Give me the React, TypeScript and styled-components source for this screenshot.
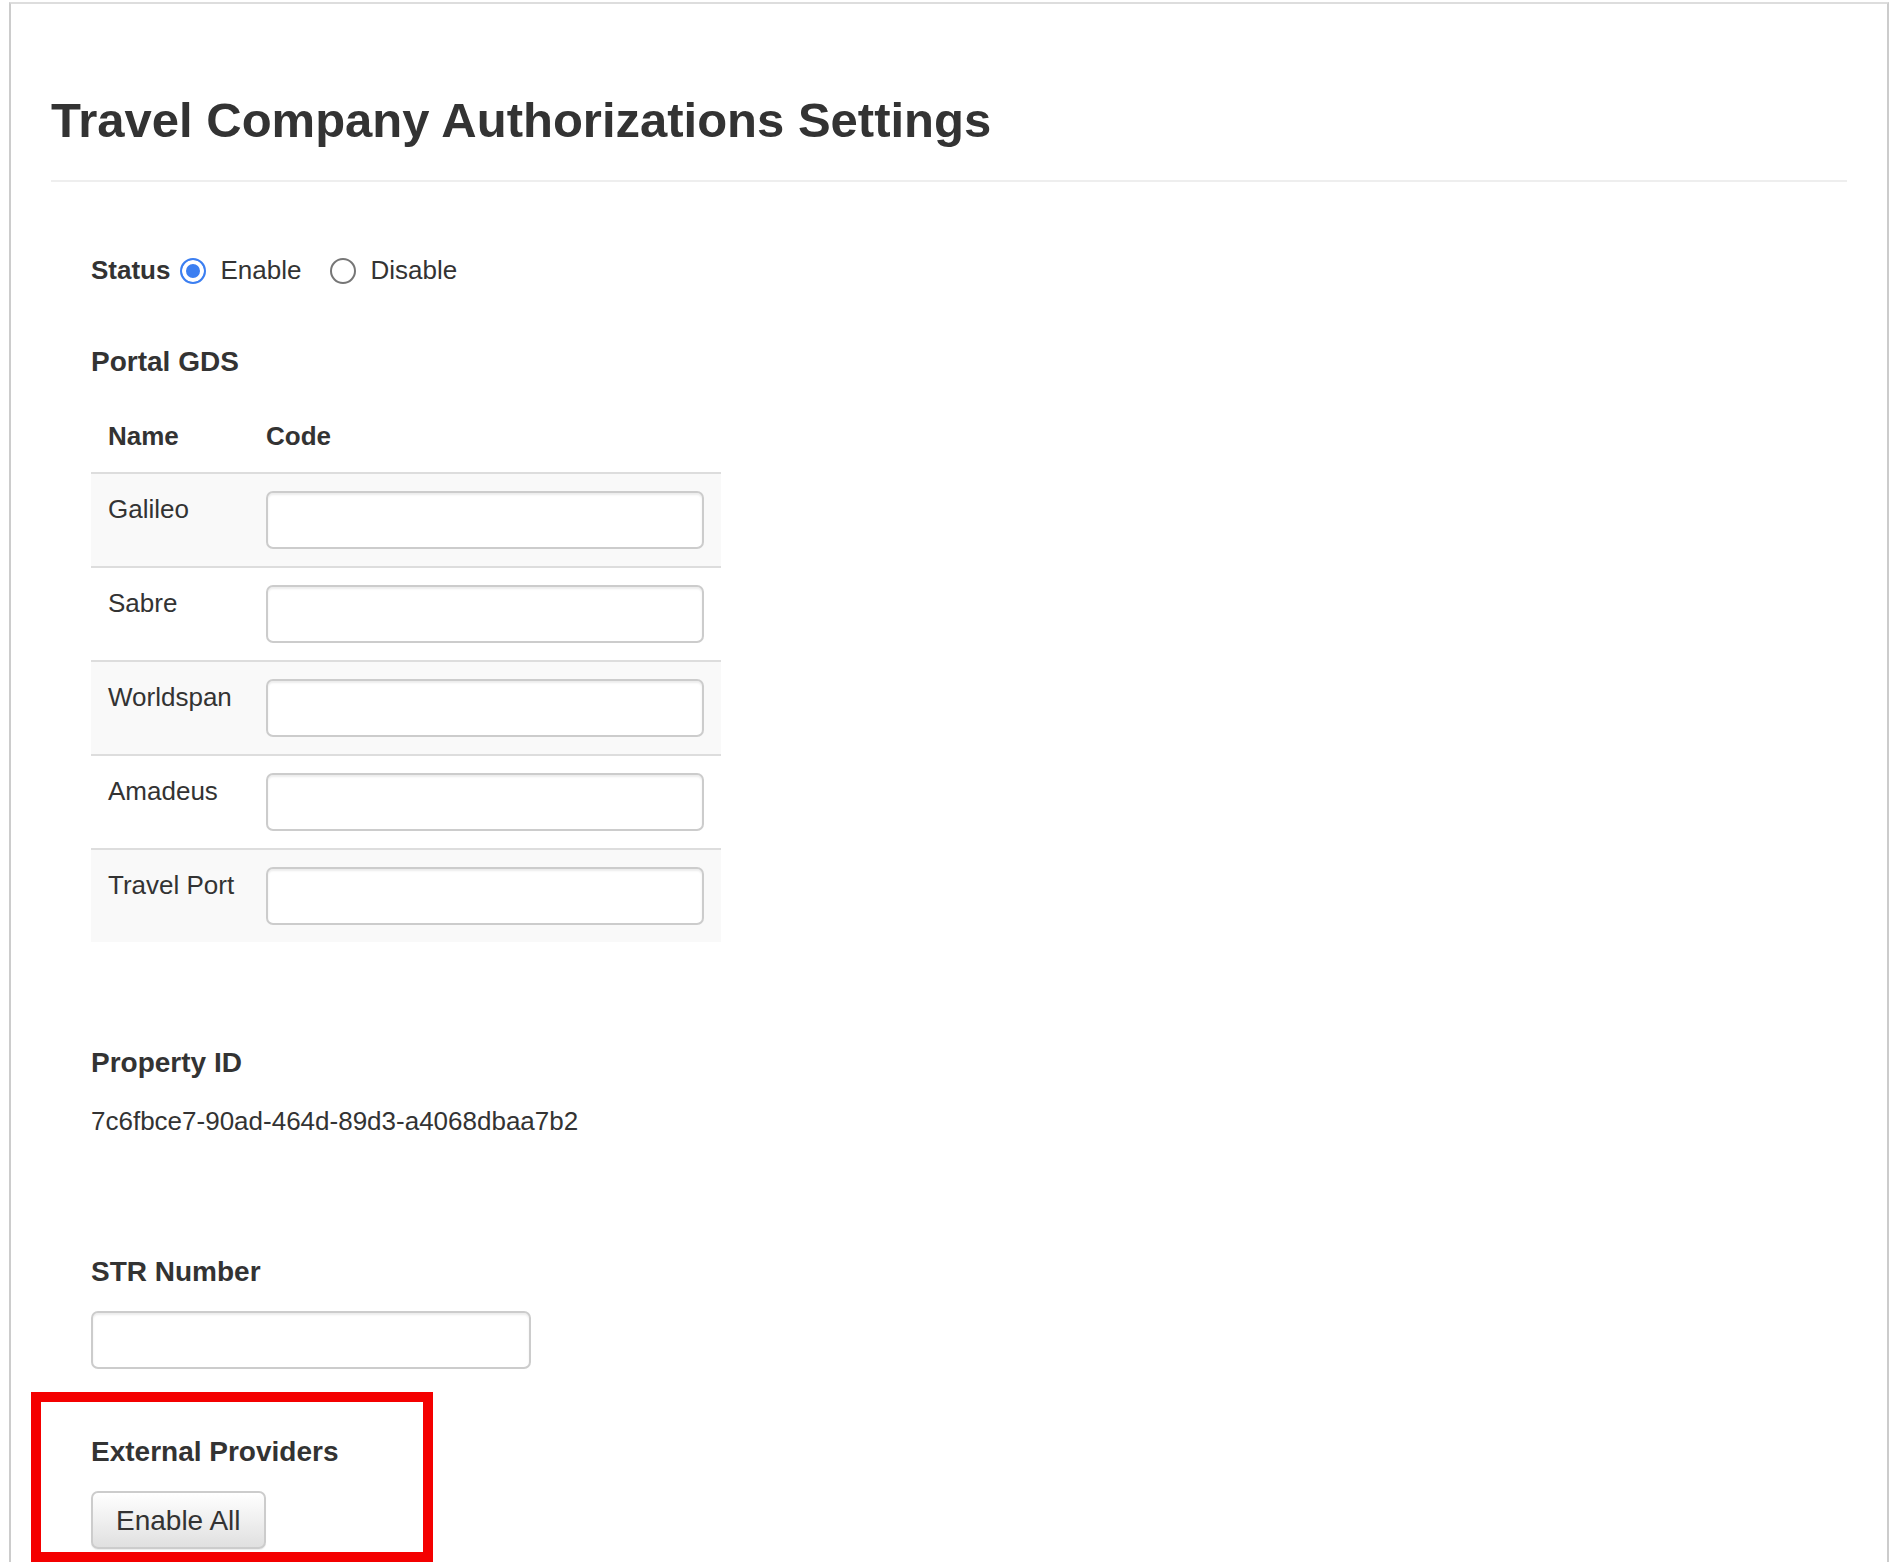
import React from "react";
import styled, { createGlobalStyle } from "styled-components";

const GlobalStyle = createGlobalStyle`
  html, body {
    margin: 0;
    padding: 0;
    height: 100%;
    overflow: hidden;
    background: #ffffff;
  }
  body {
    font-family: "Liberation Sans", Arial, Helvetica, sans-serif;
    font-size: 26px;
    line-height: 37px;
    color: #333333;
  }
  * { box-sizing: border-box; }
`;

const Page = styled.div`
  width: 1880px;
  height: calc(100vh - 2px);
  margin: 2px 0 0 9px;
  border: 2px solid #cccccc;
  border-top-color: #dddddd;
  border-bottom: none;
  padding: 0 40px;
  overflow: hidden;
`;

const Header = styled.header`
  padding-top: 89px;
  padding-bottom: 32px;
  border-bottom: 2px solid #eeeeee;
`;

const Title = styled.h1`
  margin: 0;
  font-size: 49px;
  line-height: 55px;
  font-weight: 700;
  color: #333333;
`;

const Body = styled.div`
  display: flex;
  flex-direction: column;
  align-items: flex-start;
  padding: 0 40px;
`;

const StatusRow = styled.div`
  display: flex;
  align-items: center;
  height: 37px;
  margin-top: 70px;
`;

const StatusLabel = styled.span`
  font-weight: 700;
  margin-right: 10px;
`;

const RadioOption = styled.label`
  display: flex;
  align-items: center;
  gap: 14px;
  margin-right: 29px;
  cursor: pointer;
`;

const Radio = styled.input.attrs({ type: "radio" })`
  appearance: none;
  -webkit-appearance: none;
  margin: 0;
  width: 26px;
  height: 26px;
  border-radius: 50%;
  border: 2px solid #767676;
  background: #ffffff;
  &:checked {
    border: 2.5px solid #3c7ff1;
    background: #3c7ff1;
    box-shadow: inset 0 0 0 4px #ffffff;
  }
`;

const SectionTitle = styled.div<{ $top: number }>`
  font-size: 28px;
  font-weight: 700;
  margin-top: ${(p) => p.$top}px;
`;

const GdsTable = styled.table`
  margin-top: 21px;
  width: 630px;
  border-collapse: collapse;
  table-layout: fixed;
`;

const HeadCell = styled.th<{ $width: number }>`
  width: ${(p) => p.$width}px;
  text-align: left;
  font-weight: 700;
  padding: 17px 17px;
  vertical-align: bottom;
  border-bottom: 2px solid #dddddd;
`;

const Row = styled.tr<{ $striped: boolean }>`
  background: ${(p) => (p.$striped ? "#f9f9f9" : "transparent")};
`;

const Cell = styled.td`
  padding: 17px 17px;
  vertical-align: top;
  white-space: nowrap;
  border-top: 2px solid #dddddd;
`;

const TextInput = styled.input.attrs({ type: "text" })<{ $width: number }>`
  display: block;
  width: ${(p) => p.$width}px;
  height: 58px;
  margin: 0;
  padding: 0 16px;
  font: inherit;
  color: #555555;
  background: #ffffff;
  border: 2px solid #cccccc;
  border-radius: 7px;
  box-shadow: inset 0 2px 2px rgba(0, 0, 0, 0.075);
  outline: none;
`;

const Value = styled.div`
  margin-top: 22px;
`;

const FieldInput = styled(TextInput)`
  margin-top: 21px;
`;

const Annotated = styled.div`
  position: relative;
  margin-top: 64px;
  display: flex;
  flex-direction: column;
  align-items: flex-start;
`;

const RedFrame = styled.div`
  position: absolute;
  left: -60px;
  top: -41px;
  width: 402px;
  height: 170px;
  border: 10px solid #f40000;
  pointer-events: none;
`;

const Button = styled.button`
  margin-top: 21px;
  height: 58px;
  padding: 0 23px;
  font: inherit;
  font-size: 28px;
  color: #333333;
  border: 2px solid #cccccc;
  border-radius: 7px;
  background: linear-gradient(to bottom, #ffffff 0%, #e0e0e0 100%);
  box-shadow: inset 0 1px 0 rgba(255, 255, 255, 0.15), 0 1px 1px rgba(0, 0, 0, 0.075);
  cursor: pointer;
`;

const gds = ["Galileo", "Sabre", "Worldspan", "Amadeus", "Travel Port"];

export default function App() {
  const [status, setStatus] = React.useState("enable");
  return (
    <>
      <GlobalStyle />
      <Page>
        <Header>
          <Title>Travel Company Authorizations Settings</Title>
        </Header>
        <Body>
          <StatusRow>
            <StatusLabel>Status</StatusLabel>
            <RadioOption>
              <Radio
                name="status"
                checked={status === "enable"}
                onChange={() => setStatus("enable")}
              />
              Enable
            </RadioOption>
            <RadioOption>
              <Radio
                name="status"
                checked={status === "disable"}
                onChange={() => setStatus("disable")}
              />
              Disable
            </RadioOption>
          </StatusRow>

          <SectionTitle $top={54}>Portal GDS</SectionTitle>
          <GdsTable>
            <thead>
              <tr>
                <HeadCell $width={158}>Name</HeadCell>
                <HeadCell $width={472}>Code</HeadCell>
              </tr>
            </thead>
            <tbody>
              {gds.map((name, i) => (
                <Row key={name} $striped={i % 2 === 0}>
                  <Cell>{name}</Cell>
                  <Cell>
                    <TextInput $width={438} />
                  </Cell>
                </Row>
              ))}
            </tbody>
          </GdsTable>

          <SectionTitle $top={102}>Property ID</SectionTitle>
          <Value>7c6fbce7-90ad-464d-89d3-a4068dbaa7b2</Value>

          <SectionTitle $top={113}>STR Number</SectionTitle>
          <FieldInput $width={440} />

          <Annotated>
            <RedFrame />
            <SectionTitle $top={0}>External Providers</SectionTitle>
            <Button type="button">Enable All</Button>
          </Annotated>
        </Body>
      </Page>
    </>
  );
}
